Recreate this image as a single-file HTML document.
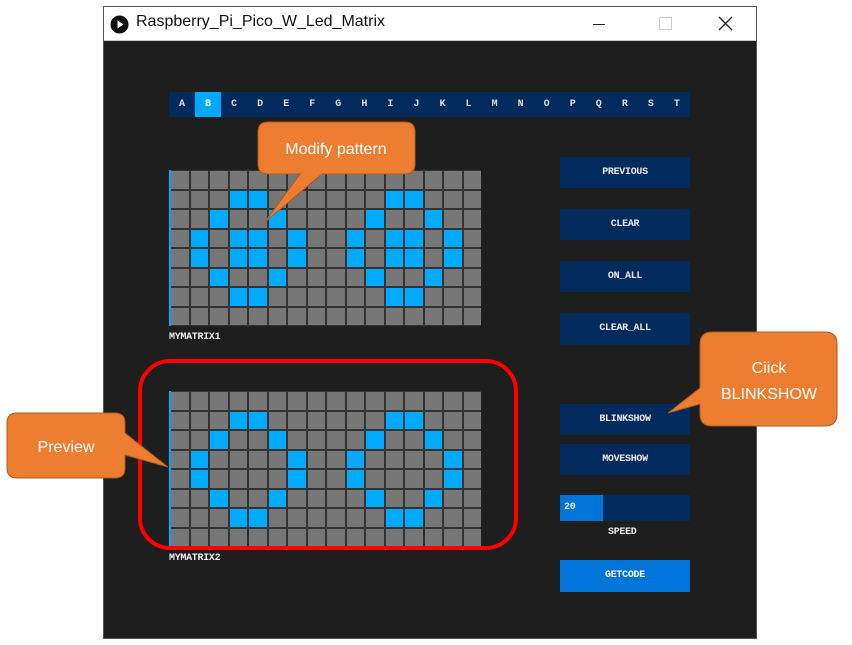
<!DOCTYPE html>
<html><head><meta charset="utf-8"><style>
*{margin:0;padding:0;box-sizing:border-box}
body{width:852px;height:645px;background:#fff;position:relative;overflow:hidden;font-family:"Liberation Sans",sans-serif}
.win{position:absolute;left:103px;top:6px;width:654px;height:633px;border:1px solid #555;background:#1e1e1e}
.title{position:absolute;left:0;top:0;width:652px;height:34px;background:#fff;border-bottom:1px solid #ccc}
.title span{position:absolute;left:32px;top:6px;font-size:16px;color:#111}
.tabs{position:absolute;left:169px;top:92px;width:521px;height:25px;background:#002b5c;display:flex}
.tabs div{width:26.05px;height:25px;line-height:25px;text-align:center;color:#ddd;font-family:"Liberation Mono",monospace;font-size:10px;font-weight:bold}
.btn{position:absolute;left:560px;width:130px;background:#002b5c;color:#e8e8e8;font-family:"Liberation Mono",monospace;font-size:10px;font-weight:bold;text-align:center;letter-spacing:-0.3px}
.grid{position:absolute;left:169px;width:312px;height:156px;background:#333;border-left:2px solid #00a8ff}
.c{position:absolute;width:17.5px;height:17.5px;background:#777}
.on{background:#00aaff}
.lbl{position:absolute;color:#eee;font-family:"Liberation Mono",monospace;font-size:10px;font-weight:bold;letter-spacing:-0.3px}
</style></head><body>
<div class="win"><div class="title">
<svg style="position:absolute;left:6px;top:8px" width="19" height="19"><circle cx="9.5" cy="9.5" r="9" fill="#111"/><path d="M7.5 5.5 L13.5 9.5 L7.5 13.5Z" fill="#fff"/></svg>
<span>Raspberry_Pi_Pico_W_Led_Matrix</span>
<div style="position:absolute;left:489px;top:17px;width:12px;height:1px;background:#222"></div>
<div style="position:absolute;left:555px;top:10px;width:13px;height:13px;border:1px solid #ccc"></div>
<svg style="position:absolute;left:614px;top:9px" width="15" height="15"><path d="M1 1L14 14M14 1L1 14" stroke="#222" stroke-width="1.3"/></svg>
</div></div>
<div class="tabs"><div>A</div><div style="background:#00a8ff;color:#fff">B</div><div>C</div><div>D</div><div>E</div><div>F</div><div>G</div><div>H</div><div>I</div><div>J</div><div>K</div><div>L</div><div>M</div><div>N</div><div>O</div><div>P</div><div>Q</div><div>R</div><div>S</div><div>T</div></div>
<div class="grid" id="g1" style="top:170px"></div>
<div class="lbl" style="left:169px;top:332px">MYMATRIX1</div>
<div class="grid" id="g2" style="top:391px"></div>
<div class="lbl" style="left:169px;top:553px">MYMATRIX2</div>
<div class="btn" style="top:157px;height:31px;line-height:31px">PREVIOUS</div>
<div class="btn" style="top:209px;height:31px;line-height:31px">CLEAR</div>
<div class="btn" style="top:261px;height:31px;line-height:31px">ON_ALL</div>
<div class="btn" style="top:313px;height:32px;line-height:32px">CLEAR_ALL</div>
<div class="btn" style="top:404px;height:31px;line-height:31px">BLINKSHOW</div>
<div class="btn" style="top:444px;height:31px;line-height:31px">MOVESHOW</div>
<div class="btn" style="top:495px;height:26px"><div style="position:absolute;left:0;top:0;width:43px;height:26px;background:#0074d9;line-height:26px;text-align:left;padding-left:4px">20</div></div>
<div class="lbl" style="left:608px;top:527px">SPEED</div>
<div class="btn" style="top:560px;height:32px;line-height:32px;background:#0074d9;color:#fff">GETCODE</div>
<svg style="position:absolute;left:0;top:0" width="852" height="645">
<rect x="140" y="361" width="376" height="187" rx="30" fill="none" stroke="#f00" stroke-width="4"/>
<path d="M268 122H405Q415 122 415 132V164Q415 174 405 174H322L265 222L300 174H268Q258 174 258 164V132Q258 122 268 122Z" fill="#ed7d31" stroke="#ae5a21"/>
<path d="M712 332H825Q837 332 837 344V414Q837 426 825 426H712Q700 426 700 414V404L668 413L700 388V344Q700 332 712 332Z" fill="#ed7d31" stroke="#ae5a21"/>
<path d="M17 413H115Q125 413 125 423V433L168 467L125 455V468Q125 478 115 478H17Q7 478 7 468V423Q7 413 17 413Z" fill="#ed7d31" stroke="#ae5a21"/>
<text x="336" y="154" fill="#fff" font-family="Liberation Sans" font-size="16" text-anchor="middle">Modify pattern</text>
<text x="769" y="373" fill="#fff" font-family="Liberation Sans" font-size="16" text-anchor="middle">Ciick</text>
<text x="769" y="399" fill="#fff" font-family="Liberation Sans" font-size="16" text-anchor="middle">BLINKSHOW</text>
<text x="66" y="452" fill="#fff" font-family="Liberation Sans" font-size="16" text-anchor="middle">Preview</text>
</svg>
<script>
var p1=[[],[3,4,11,12],[2,5,10,13],[1,3,4,6,9,11,12,14],[1,3,4,6,9,11,12,14],[2,5,10,13],[3,4,11,12],[]];
var p2=[[],[3,4,11,12],[2,5,10,13],[1,6,9,14],[1,6,9,14],[2,5,10,13],[3,4,11,12],[]];
function build(id,p){var g=document.getElementById(id),h='';for(var r=0;r<8;r++)for(var c=0;c<16;c++){h+='<div class="c'+(p[r].indexOf(c)>=0?' on':'')+'" style="left:'+(c*19.5)+'px;top:'+(r*19.5+1)+'px"></div>';}g.innerHTML=h;}
build('g1',p1);build('g2',p2);
</script>
</body></html>
